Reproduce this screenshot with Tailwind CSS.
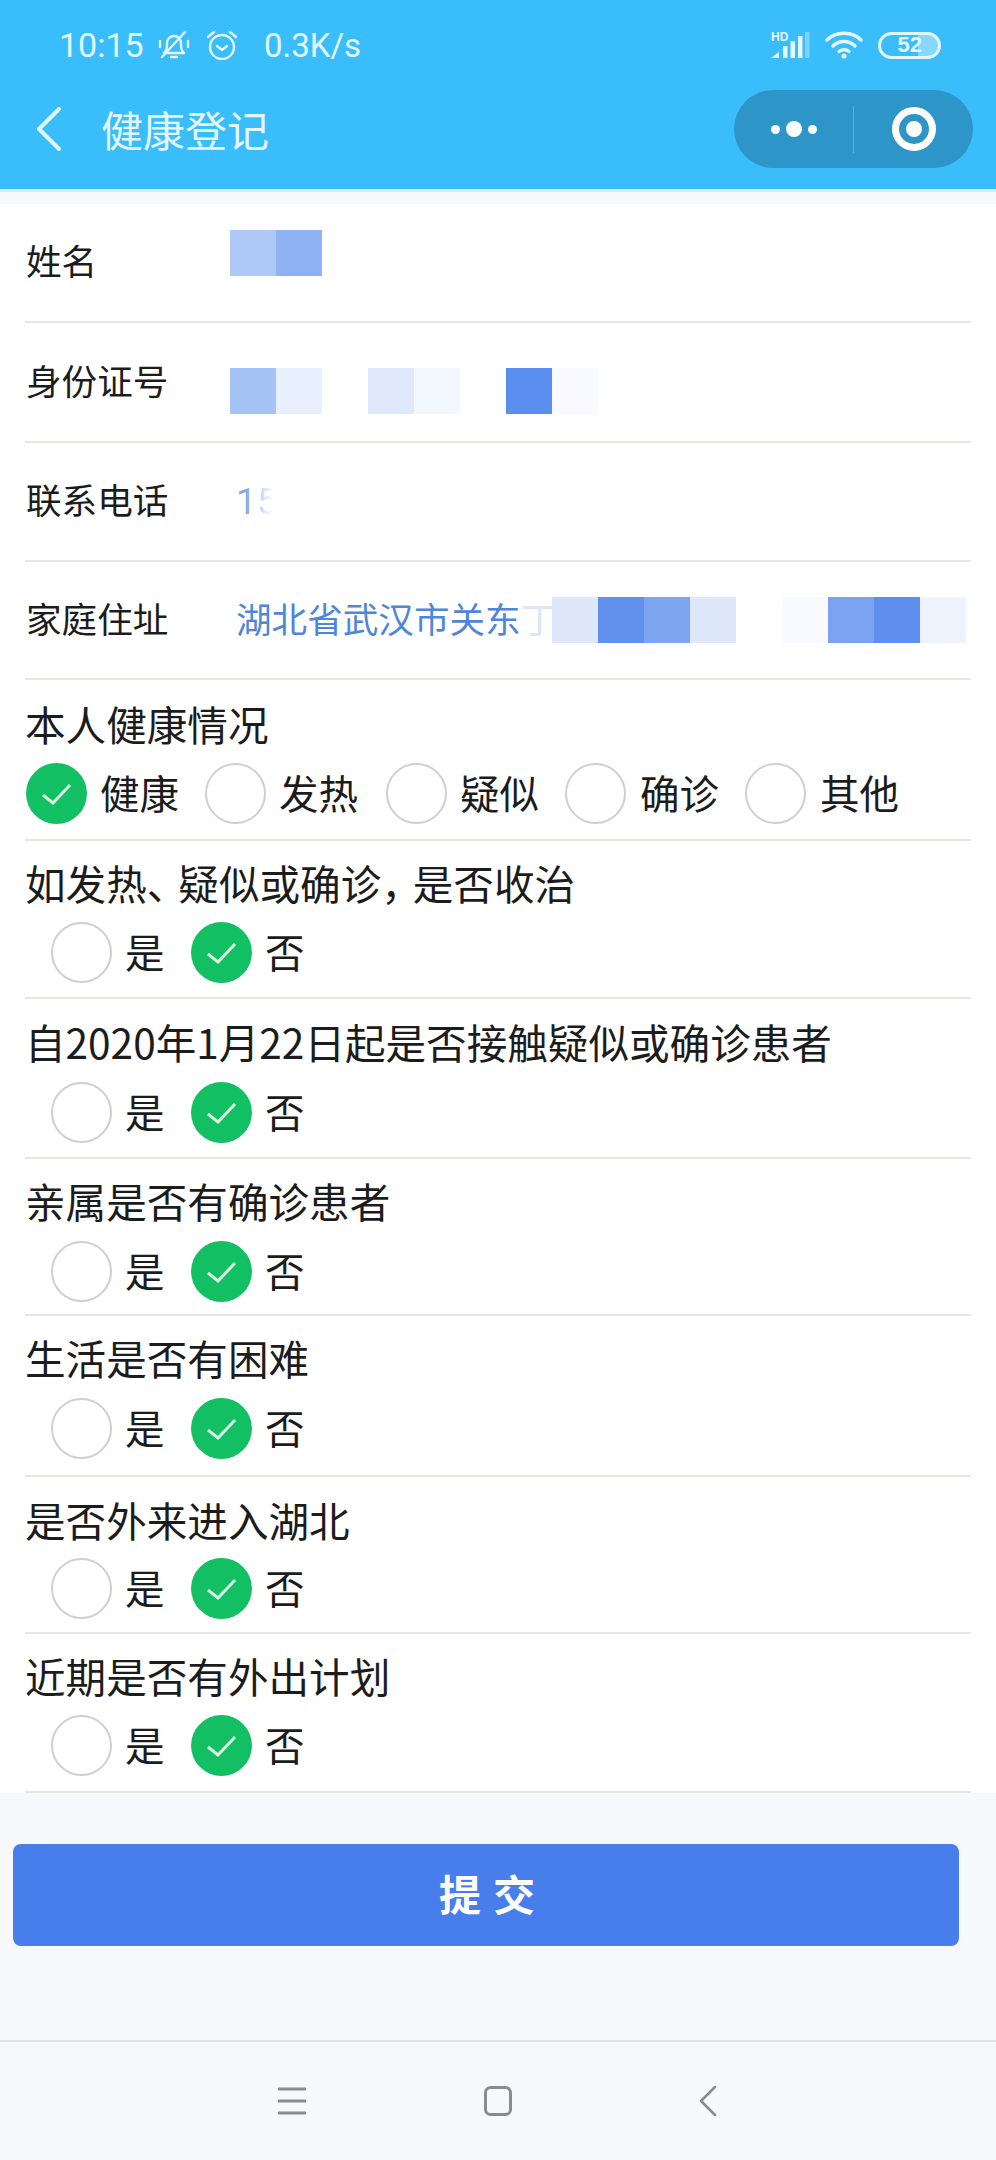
<!DOCTYPE html>
<html lang="zh-CN">
<head>
  <meta charset="UTF-8" />
  <meta name="viewport" content="width=device-width, initial-scale=1.0"/>
  <title>健康登记</title>
  <script src="https://cdn.jsdelivr.net/npm/@tailwindcss/browser@4"></script>
</head>
<body class="w-[996px] h-[2160px] overflow-hidden flex flex-col bg-[#f7f8f9] text-[#1c1c1c] font-['Noto_Sans_CJK_SC','Noto_Sans',sans-serif]">

  <!-- Status bar + title bar -->
  <header class="h-[189px] shrink-0 bg-[#3abdfb] text-[#e2f6ff] flex flex-col">
    <div class="h-[90px] flex items-center pl-[59px] font-['Roboto',sans-serif] text-[34px] leading-none">
      <span class="w-[99px]">10:15</span>
      <svg class="w-[32px] h-[30px]" viewBox="0 0 32 30" fill="none" stroke="currentColor" stroke-width="2.4" stroke-linecap="round" stroke-linejoin="round">
        <path d="M6 23h20c-3-3-3-5-3-10 0-4-3-7-7-7s-7 3-7 7c0 5 0 7-3 10z"/>
        <path d="M13 27h6"/>
        <path d="M4 27 27 2"/>
        <path d="M2 11v6M30 11v6"/>
      </svg>
      <svg class="w-[32px] h-[30px] ml-[16px]" viewBox="0 0 32 30" fill="none" stroke="currentColor" stroke-width="2.4" stroke-linecap="round" stroke-linejoin="round">
        <circle cx="16" cy="17" r="12"/>
        <path d="M11 16l5 4 5-4"/>
        <path d="M2 7l6-5M30 7l-6-5"/>
      </svg>
      <span class="ml-[26px] text-[33px]">0.3K/s</span>
      <svg class="w-[39px] h-[28px] ml-[410px]" viewBox="0 0 39 28" fill="currentColor">
        <text x="0" y="9.5" font-family="Liberation Sans" font-weight="700" font-size="12">HD</text>
        <path d="M0 27l8-6v6z"/>
        <rect x="12" y="15" width="4.5" height="12"/>
        <rect x="19.5" y="10" width="4.5" height="17"/>
        <rect x="27" y="5" width="4.5" height="22"/>
        <rect x="34" y="1" width="4.5" height="26" opacity="0.4"/>
      </svg>
      <svg class="w-[38px] h-[28px] ml-[15px]" viewBox="0 0 38 28" fill="none" stroke="currentColor" stroke-width="3.4" stroke-linecap="round">
        <path d="M2 9C11 0 27 0 36 9"/>
        <path d="M8 15C14 9 24 9 30 15"/>
        <path d="M14 20.5C17 18 21 18 24 20.5"/>
        <circle cx="19" cy="25" r="2.6" fill="currentColor" stroke="none"/>
      </svg>
      <div class="w-[63px] h-[27px] ml-[15px] rounded-full border-[3px] border-[#e2f6ff] bg-linear-to-r from-transparent from-65% to-white/40 to-65% flex items-center justify-center font-['Liberation_Sans',sans-serif] font-bold text-[22px]">52</div>
    </div>
    <div class="h-[78px] flex items-center">
      <svg class="w-[26px] h-[44px] ml-[36px]" viewBox="0 0 26 44" fill="none" stroke="currentColor" stroke-width="4" stroke-linecap="round" stroke-linejoin="round">
        <path d="M23 2 3 22l20 20"/>
      </svg>
      <span class="ml-[39px] text-[42px] leading-none">健康登记</span>
      <div class="ml-auto mr-[23px] w-[239px] h-[78px] rounded-full bg-[#2e95c9] flex items-center text-white">
        <div class="w-[119px] flex items-center justify-center gap-[6px]">
          <span class="w-[9px] h-[9px] rounded-full bg-white"></span>
          <span class="w-[16px] h-[16px] rounded-full bg-white"></span>
          <span class="w-[9px] h-[9px] rounded-full bg-white"></span>
        </div>
        <div class="w-[1px] h-[47px] bg-white/25"></div>
        <div class="flex-1 flex items-center justify-center">
          <div class="w-[44px] h-[44px] rounded-full border-[7px] border-white flex items-center justify-center">
            <span class="w-[16px] h-[16px] rounded-full bg-white"></span>
          </div>
        </div>
      </div>
    </div>
  </header>
  <div class="h-[3px] shrink-0 bg-[#dcecf5]"></div>

  <!-- Form -->
  <main class="mt-[12px] shrink-0 bg-white px-[25px] text-[35.6px] leading-none">
    <div class="h-[119px] flex items-center border-b-2 border-[#e8e6e1]">
      <span class="w-[205px] pl-[1px] mb-[5px]">姓名</span>
      <div class="flex mb-[20px]">
        <div class="w-[46px] h-[46px] bg-[#aec8f8]"></div>
        <div class="w-[46px] h-[46px] bg-[#8fb2f3]"></div>
      </div>
    </div>
    <div class="h-[120px] flex items-center border-b-2 border-[#e8e6e1]">
      <span class="w-[205px] pl-[1px] mb-[5px]">身份证号</span>
      <div class="flex mt-[17px]">
        <div class="w-[46px] h-[46px] bg-[#a6c3f6]"></div>
        <div class="w-[46px] h-[46px] bg-[#e8f0fd]"></div>
        <div class="w-[46px] h-[46px]"></div>
        <div class="w-[46px] h-[46px] bg-[#e0e9fb]"></div>
        <div class="w-[46px] h-[46px] bg-[#f3f7fe]"></div>
        <div class="w-[46px] h-[46px]"></div>
        <div class="w-[46px] h-[46px] bg-[#5a8ff0]"></div>
        <div class="w-[46px] h-[46px] bg-[#f8faff]"></div>
      </div>
    </div>
    <div class="h-[119px] flex items-center border-b-2 border-[#e8e6e1]">
      <span class="w-[205px] pl-[1px] mb-[5px]">联系电话</span>
      <span class="pl-[6px] text-[37px] font-['Roboto',sans-serif] bg-linear-to-r from-[#7fa6e4] from-30% to-white to-90% bg-clip-text text-transparent">15</span>
    </div>
    <div class="h-[118px] flex items-center border-b-2 border-[#e8e6e1]">
      <span class="w-[205px] pl-[1px] mb-[5px]">家庭住址</span>
      <span class="w-[322px] mb-[5px] pl-[6px] whitespace-nowrap text-[#4f86d8]">湖北省武汉市关东<span class="text-[#dbe6f6] tracking-[-5px]">丁</span></span>
      <div class="flex">
        <div class="w-[46px] h-[46px] bg-[#dfe8fb]"></div>
        <div class="w-[46px] h-[46px] bg-[#6191ef]"></div>
        <div class="w-[46px] h-[46px] bg-[#7ea5f0]"></div>
        <div class="w-[46px] h-[46px] bg-[#dfe8fb]"></div>
        <div class="w-[46px] h-[46px]"></div>
        <div class="w-[46px] h-[46px] bg-[#f8faff]"></div>
        <div class="w-[46px] h-[46px] bg-[#7ba3f1]"></div>
        <div class="w-[46px] h-[46px] bg-[#5f8fee]"></div>
        <div class="w-[46px] h-[46px] bg-[#eef3fd]"></div>
      </div>
    </div>

    <!-- Health status -->
    <section class="h-[161px] pt-[19px] border-b-2 border-[#e8e6e1] text-[40.6px]">
      <p class="h-[50px] leading-[50px]">本人健康情况</p>
      <div class="mt-[14px] ml-[1px] flex text-[39.5px]">
        <label class="w-[179px] flex items-center gap-[13px]">
          <span class="w-[61px] h-[61px] rounded-full bg-[#12bf63] flex items-center justify-center">
            <svg class="w-[30px] h-[22px]" viewBox="0 0 30 22" fill="none" stroke="#d8f5e3" stroke-width="3"><path d="M1 12l10 8L28 2"/></svg>
          </span><span class="mb-[4px]">健康</span>
        </label>
        <label class="w-[181px] flex items-center gap-[13px]"><span class="w-[61px] h-[61px] rounded-full border-2 border-[#cfcfcf]"></span><span class="mb-[4px]">发热</span></label>
        <label class="w-[179px] flex items-center gap-[13px]"><span class="w-[61px] h-[61px] rounded-full border-2 border-[#cfcfcf]"></span><span class="mb-[4px]">疑似</span></label>
        <label class="w-[180px] flex items-center gap-[14px]"><span class="w-[61px] h-[61px] rounded-full border-2 border-[#cfcfcf]"></span><span class="mb-[4px]">确诊</span></label>
        <label class="flex items-center gap-[14px]"><span class="w-[61px] h-[61px] rounded-full border-2 border-[#cfcfcf]"></span><span class="mb-[4px]">其他</span></label>
      </div>
    </section>

    <section class="h-[158px] pt-[17px] border-b-2 border-[#e8e6e1] text-[40.6px]">
      <p class="h-[50px] leading-[50px] whitespace-nowrap">如发热<span class="tracking-[-9px]">、</span>疑似或确诊<span class="tracking-[-9px]">，</span>是否收治</p>
      <div class="mt-[14px] pl-[26px] flex text-[39.5px]">
        <label class="w-[140px] flex items-center gap-[13px]"><span class="w-[61px] h-[61px] rounded-full border-2 border-[#cfcfcf]"></span><span class="mb-[4px]">是</span></label>
        <label class="flex items-center gap-[13px]">
          <span class="w-[61px] h-[61px] rounded-full bg-[#12bf63] flex items-center justify-center">
            <svg class="w-[30px] h-[22px]" viewBox="0 0 30 22" fill="none" stroke="#d8f5e3" stroke-width="3"><path d="M1 12l10 8L28 2"/></svg>
          </span><span class="mb-[4px]">否</span>
        </label>
      </div>
    </section>

    <section class="h-[160px] pt-[18px] border-b-2 border-[#e8e6e1] text-[40.6px]">
      <p class="h-[50px] leading-[50px] whitespace-nowrap">自2020年1月22日起是否接触疑似或确诊患者</p>
      <div class="mt-[15px] pl-[26px] flex text-[39.5px]">
        <label class="w-[140px] flex items-center gap-[13px]"><span class="w-[61px] h-[61px] rounded-full border-2 border-[#cfcfcf]"></span><span class="mb-[4px]">是</span></label>
        <label class="flex items-center gap-[13px]">
          <span class="w-[61px] h-[61px] rounded-full bg-[#12bf63] flex items-center justify-center">
            <svg class="w-[30px] h-[22px]" viewBox="0 0 30 22" fill="none" stroke="#d8f5e3" stroke-width="3"><path d="M1 12l10 8L28 2"/></svg>
          </span><span class="mb-[4px]">否</span>
        </label>
      </div>
    </section>

    <section class="h-[157px] pt-[17px] border-b-2 border-[#e8e6e1] text-[40.6px]">
      <p class="h-[50px] leading-[50px]">亲属是否有确诊患者</p>
      <div class="mt-[15px] pl-[26px] flex text-[39.5px]">
        <label class="w-[140px] flex items-center gap-[13px]"><span class="w-[61px] h-[61px] rounded-full border-2 border-[#cfcfcf]"></span><span class="mb-[4px]">是</span></label>
        <label class="flex items-center gap-[13px]">
          <span class="w-[61px] h-[61px] rounded-full bg-[#12bf63] flex items-center justify-center">
            <svg class="w-[30px] h-[22px]" viewBox="0 0 30 22" fill="none" stroke="#d8f5e3" stroke-width="3"><path d="M1 12l10 8L28 2"/></svg>
          </span><span class="mb-[4px]">否</span>
        </label>
      </div>
    </section>

    <section class="h-[161px] pt-[17px] border-b-2 border-[#e8e6e1] text-[40.6px]">
      <p class="h-[50px] leading-[50px]">生活是否有困难</p>
      <div class="mt-[15px] pl-[26px] flex text-[39.5px]">
        <label class="w-[140px] flex items-center gap-[13px]"><span class="w-[61px] h-[61px] rounded-full border-2 border-[#cfcfcf]"></span><span class="mb-[4px]">是</span></label>
        <label class="flex items-center gap-[13px]">
          <span class="w-[61px] h-[61px] rounded-full bg-[#12bf63] flex items-center justify-center">
            <svg class="w-[30px] h-[22px]" viewBox="0 0 30 22" fill="none" stroke="#d8f5e3" stroke-width="3"><path d="M1 12l10 8L28 2"/></svg>
          </span><span class="mb-[4px]">否</span>
        </label>
      </div>
    </section>

    <section class="h-[157px] pt-[18px] border-b-2 border-[#e8e6e1] text-[40.6px]">
      <p class="h-[50px] leading-[50px]">是否外来进入湖北</p>
      <div class="mt-[13px] pl-[26px] flex text-[39.5px]">
        <label class="w-[140px] flex items-center gap-[13px]"><span class="w-[61px] h-[61px] rounded-full border-2 border-[#cfcfcf]"></span><span class="mb-[4px]">是</span></label>
        <label class="flex items-center gap-[13px]">
          <span class="w-[61px] h-[61px] rounded-full bg-[#12bf63] flex items-center justify-center">
            <svg class="w-[30px] h-[22px]" viewBox="0 0 30 22" fill="none" stroke="#d8f5e3" stroke-width="3"><path d="M1 12l10 8L28 2"/></svg>
          </span><span class="mb-[4px]">否</span>
        </label>
      </div>
    </section>

    <section class="h-[159px] pt-[17px] border-b-2 border-[#e8e6e1] text-[40.6px]">
      <p class="h-[50px] leading-[50px]">近期是否有外出计划</p>
      <div class="mt-[14px] pl-[26px] flex text-[39.5px]">
        <label class="w-[140px] flex items-center gap-[13px]"><span class="w-[61px] h-[61px] rounded-full border-2 border-[#cfcfcf]"></span><span class="mb-[4px]">是</span></label>
        <label class="flex items-center gap-[13px]">
          <span class="w-[61px] h-[61px] rounded-full bg-[#12bf63] flex items-center justify-center">
            <svg class="w-[30px] h-[22px]" viewBox="0 0 30 22" fill="none" stroke="#d8f5e3" stroke-width="3"><path d="M1 12l10 8L28 2"/></svg>
          </span><span class="mb-[4px]">否</span>
        </label>
      </div>
    </section>
  </main>

  <!-- Submit -->
  <div class="flex-1 px-[13px] pt-[51px] pr-[37px]">
    <button class="w-full h-[102px] rounded-[8px] bg-[#477eeb] text-white font-bold text-[42px] tracking-[12px] pl-[14px] pb-[5px] flex items-center justify-center">提交</button>
  </div>

  <!-- Android nav bar -->
  <nav class="h-[120px] shrink-0 border-t-2 border-[#e2e3e5] flex items-center pl-[278px] text-[#8b8b8b]">
    <svg class="w-[28px] h-[28px]" viewBox="0 0 28 28" fill="none" stroke="currentColor" stroke-width="3">
      <path d="M0 2h28M0 14h28M0 26h28"/>
    </svg>
    <svg class="w-[28px] h-[30px] ml-[178px]" viewBox="0 0 28 30" fill="none" stroke="currentColor" stroke-width="3">
      <rect x="1.5" y="1.5" width="25" height="27" rx="5"/>
    </svg>
    <svg class="w-[18px] h-[30px] ml-[187px]" viewBox="0 0 18 30" fill="none" stroke="currentColor" stroke-width="2.6" stroke-linecap="round" stroke-linejoin="round">
      <path d="M16 1 2 15l14 14"/>
    </svg>
  </nav>
</body>
</html>
